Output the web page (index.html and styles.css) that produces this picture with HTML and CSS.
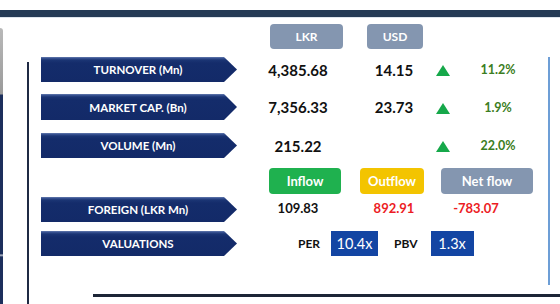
FILE: index.html
```html
<!DOCTYPE html>
<html>
<head>
<meta charset="utf-8">
<link rel="stylesheet" href="styles.css">
</head>
<body>
<div class="topbar"></div>
<div class="stage">
  <div class="edge"></div>
  <div class="main">
    <div class="head">
      <div class="pill grey lkr">LKR</div>
      <div class="pill grey usd">USD</div>
    </div>
    <div class="box">
      <div class="lline"></div>
      <div class="inner">
        <div class="upper">
          <div class="rows">
            <div class="row r1">
              <div class="arrow">TURNOVER (Mn)</div>
              <div class="val">4,385.68</div>
              <div class="val">14.15</div>
              <div class="tri"></div>
              <div class="pct">11.2%</div>
            </div>
            <div class="row r2">
              <div class="arrow">MARKET CAP. (Bn)</div>
              <div class="val">7,356.33</div>
              <div class="val">23.73</div>
              <div class="tri"></div>
              <div class="pct">1.9%</div>
            </div>
            <div class="row r3">
              <div class="arrow">VOLUME (Mn)</div>
              <div class="val">215.22</div>
              <div class="val"></div>
              <div class="tri"></div>
              <div class="pct">22.0%</div>
            </div>
            <div class="row r4">
              <div class="blank"></div>
              <div class="cell"><div class="pill green inflow">Inflow</div></div>
              <div class="cell"><div class="pill yellow outflow">Outflow</div></div>
              <div class="cell span"><div class="pill grey netflow">Net flow</div></div>
            </div>
            <div class="row r5">
              <div class="arrow">FOREIGN (LKR Mn)</div>
              <div class="fval">109.83</div>
              <div class="fval red">892.91</div>
              <div class="fval red span net">-783.07</div>
            </div>
            <div class="row r6">
              <div class="arrow">VALUATIONS</div>
              <div class="valuation">
                <span class="vlabel per">PER</span>
                <span class="vbox per-box">10.4x</span>
                <span class="vlabel pbv">PBV</span>
                <span class="vbox pbv-box">1.3x</span>
              </div>
            </div>
          </div>
          <div class="rline"></div>
        </div>
        <div class="bline"></div>
      </div>
    </div>
  </div>
</div>
</body>
</html>
```

FILE: styles.css
```css
html, body {
  margin: 0;
  padding: 0;
}
body {
  width: 560px;
  height: 304px;
  overflow: hidden;
  background: #ffffff;
  font-family: Lato, "Liberation Sans", sans-serif;
  color: #111111;
}
.topbar {
  margin-top: 10px;
  height: 7px;
  background: #243a55;
  border-bottom: 1px solid #dde4ec;
}
.stage {
  display: flex;
  height: 286px;
}
.edge {
  width: 3px;
  margin-top: 10px;
  background: linear-gradient(to bottom, #b9b9b9 0, #9a9a9a 66px, #1c2f5c 67px, #1c2f5c 226px, #c9ced8 227px, #1c2f5c 229px);
  border-radius: 0 3px 0 0;
}
.main {
  flex: 1;
  display: flex;
  flex-direction: column;
}
.head {
  display: flex;
  margin-top: 6px;
  padding-left: 267px;
  gap: 24px;
  height: 25px;
}
.pill {
  display: flex;
  align-items: center;
  justify-content: center;
  border-radius: 4px;
  color: #ffffff;
  font-weight: 700;
}
.grey { background: #8496b0; }
.green { background: #1fb14f; }
.yellow { background: #f3c400; }
.lkr { width: 73px; font-size: 12px; }
.usd { width: 56px; font-size: 12px; }
.box {
  flex: 1;
  display: flex;
  margin-top: 8px;
}
.lline {
  width: 2px;
  margin-left: 24px;
  margin-top: 5px;
  background: #1f2a44;
}
.inner {
  flex: 1;
  display: flex;
  flex-direction: column;
}
.upper {
  display: flex;
  height: 228px;
}
.rows {
  flex: 1;
  padding-left: 12px;
  display: flex;
  flex-direction: column;
}
.rline {
  width: 2px;
  margin-right: 10px;
  background: #6d9ed6;
}
.bline {
  margin-top: 9px;
  margin-left: 64px;
  height: 3px;
  background: #1c2536;
}
.row {
  display: grid;
  grid-template-columns: 196px 122px 70px 28px 82px;
  align-items: center;
  height: 25px;
}
.r2 { margin-top: 12px; height: 26px; }
.r3 { margin-top: 13px; }
.r4 { margin-top: 10px; height: 26px; align-items: stretch; }
.r5 { margin-top: 3px; }
.r6 { margin-top: 9px; }
.arrow {
  height: 100%;
  display: flex;
  align-items: center;
  justify-content: center;
  padding-right: 2px;
  box-sizing: border-box;
  clip-path: polygon(0 0, calc(100% - 13px) 0, 100% 50%, calc(100% - 13px) 100%, 0 100%);
  background: linear-gradient(to bottom, #6a80b0 0, #3d5796 1px, #1b3574 3px, #142c6b 6px, #132a68 100%);
  color: #ffffff;
  font-size: 11.5px;
  font-weight: 700;
}
.val {
  text-align: center;
  font-size: 15px;
  font-weight: 700;
}
.tri {
  justify-self: center;
  width: 0;
  height: 0;
  margin-top: 2px;
  border-left: 7px solid transparent;
  border-right: 7px solid transparent;
  border-bottom: 11px solid #16a84a;
}
.pct {
  text-align: center;
  font-size: 12.5px;
  font-weight: 700;
  color: #3b7d22;
}
.cell {
  display: flex;
}
.span {
  grid-column: span 2;
}
.inflow { width: 72px; margin-left: 32px; font-size: 13px; }
.outflow { width: 64px; margin-left: 1px; font-size: 13px; }
.netflow { width: 92px; margin-left: 12px; font-size: 13px; }
.fval {
  text-align: center;
  font-size: 13px;
  font-weight: 700;
  margin-top: -3px;
}
.red { color: #ec1c24; }
.net { padding-right: 16px; }
.valuation {
  grid-column: 2 / -1;
  display: flex;
  align-items: center;
  height: 25px;
  padding-left: 61px;
}
.vlabel {
  font-size: 12px;
  font-weight: 700;
}
.vbox {
  height: 25px;
  display: flex;
  align-items: center;
  justify-content: center;
  background: #1345a3;
  color: #ffffff;
  font-size: 14.5px;
}
.per-box { width: 47px; margin-left: 11px; }
.pbv { margin-left: 16px; }
.pbv-box { width: 43px; margin-left: 13px; }
```
